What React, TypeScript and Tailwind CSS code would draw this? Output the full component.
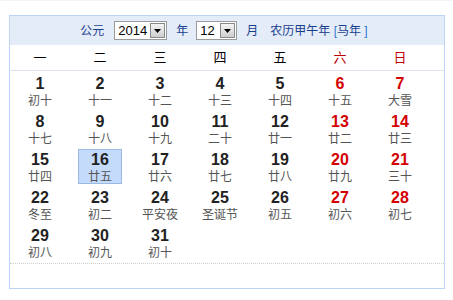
import React from "react";

const lunar = [
  ["初十", "十一", "十二", "十三", "十四", "十五", "大雪"],
  ["十七", "十八", "十九", "二十", "廿一", "廿二", "廿三"],
  ["廿四", "廿五", "廿六", "廿七", "廿八", "廿九", "三十"],
  ["冬至", "初二", "平安夜", "圣诞节", "初五", "初六", "初七"],
  ["初八", "初九", "初十"],
];
const weekdays = ["一", "二", "三", "四", "五", "六", "日"];
const font = { fontFamily: '"Liberation Sans", "Noto Sans CJK SC", sans-serif' };

function FakeSelect({ value, w }: { value: string; w: string }) {
  return (
    <div className={`flex h-[19px] ${w} items-stretch border border-[#9a9a9a] bg-white`}>
      <span className="flex-1 pl-[3px] text-[13px] leading-[17px] text-black">{value}</span>
      <span className="m-[1px] flex w-[15px] items-center justify-center border border-[#8a8a8a] bg-gradient-to-b from-[#f4f4f4] to-[#cfcfcf]">
        <svg width="7" height="4" viewBox="0 0 7 4"><path d="M0 0h7L3.5 4z" fill="#000" /></svg>
      </span>
    </div>
  );
}

export default function App() {
  return (
    <div className="h-[300px] w-[453px] bg-white" style={font}>
      <div className="h-[1px] bg-[#f2f4f7]" />
      <div className="ml-[9px] mt-[14px] h-[274px] w-[436px] border border-[#bcd4f8]">
        <div className="flex h-[29px] items-center justify-center bg-[#e4ecf8] pr-[6px] text-[12px] text-[#1b3f8f]">
          <span className="mr-[10px]">公元</span>
          <FakeSelect value="2014" w="w-[53px]" />
          <span className="ml-[9px] mr-[8px]">年</span>
          <FakeSelect value="12" w="w-[41px]" />
          <span className="ml-[9px] mr-[12px]">月</span>
          <span>农历甲午年<span className="text-[#3377cc]"> [</span>马年<span className="text-[#3377cc]"> ]</span></span>
        </div>
        <div className="grid h-[26px] grid-cols-[repeat(7,60px)] items-center border-b border-[#dde3ea] text-[13px]">
          {weekdays.map((d, i) => (
            <div key={d} className={`pt-[1px] text-center ${i >= 5 ? "text-[#c00000]" : "text-black"}`}>{d}</div>
          ))}
        </div>
        <div className="grid grid-cols-[repeat(7,60px)]">
          {Array.from({ length: 31 }, (_, n) => {
            const day = n + 1;
            const col = n % 7;
            const sel = day === 16;
            return (
              <div key={day} className="flex h-[38px] justify-center pt-[2px] pb-[1px]">
                <div className={`flex w-[44px] flex-col items-center ${sel ? "border border-[#9cb9e2] bg-[#c5dbfc]" : "border border-transparent"}`}>
                  <span className={`text-[16px] font-bold leading-[19px] ${col >= 5 ? "text-[#d40000]" : "text-[#222]"}`}>{day}</span>
                  <span className="text-[12px] leading-[16px] text-[#555]">{lunar[Math.floor(n / 7)][col]}</span>
                </div>
              </div>
            );
          })}
        </div>
        <div className="mt-[2px] border-b border-dotted border-[#cfcfcf]" />
      </div>
    </div>
  );
}
